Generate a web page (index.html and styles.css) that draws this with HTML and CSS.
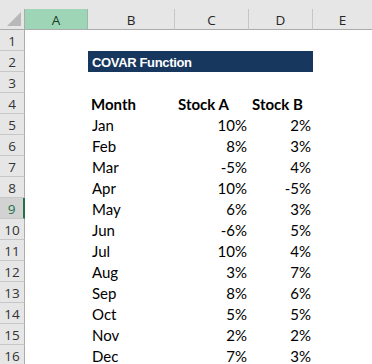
FILE: index.html
```html
<!DOCTYPE html>
<html>
<head>
<meta charset="utf-8">
<link rel="stylesheet" href="styles.css">
</head>
<body>
<div class="sheet">
  <div class="strip"></div>
  <div class="grid">
    <div class="corner"><span class="tri"></span></div>
    <div class="ch sel">A</div>
    <div class="ch">B</div>
    <div class="ch">C</div>
    <div class="ch">D</div>
    <div class="ch last">E</div>

    <div class="rh">1</div><div class="c"></div><div class="c"></div><div class="c"></div><div class="c"></div><div class="c"></div>

    <div class="rh">2</div><div class="c"></div><div class="title">COVAR Function</div><div class="c"></div>

    <div class="rh">3</div><div class="c"></div><div class="c"></div><div class="c"></div><div class="c"></div><div class="c"></div>

    <div class="rh">4</div><div class="c"></div><div class="c b">Month</div><div class="c b">Stock A</div><div class="c b">Stock B</div><div class="c"></div>

    <div class="rh">5</div><div class="c"></div><div class="c">Jan</div><div class="c n">10%</div><div class="c n">2%</div><div class="c"></div>
    <div class="rh">6</div><div class="c"></div><div class="c">Feb</div><div class="c n">8%</div><div class="c n">3%</div><div class="c"></div>
    <div class="rh">7</div><div class="c"></div><div class="c">Mar</div><div class="c n">-5%</div><div class="c n">4%</div><div class="c"></div>
    <div class="rh">8</div><div class="c"></div><div class="c">Apr</div><div class="c n">10%</div><div class="c n">-5%</div><div class="c"></div>
    <div class="rh active">9</div><div class="c"></div><div class="c">May</div><div class="c n">6%</div><div class="c n">3%</div><div class="c"></div>
    <div class="rh">10</div><div class="c"></div><div class="c">Jun</div><div class="c n">-6%</div><div class="c n">5%</div><div class="c"></div>
    <div class="rh">11</div><div class="c"></div><div class="c">Jul</div><div class="c n">10%</div><div class="c n">4%</div><div class="c"></div>
    <div class="rh">12</div><div class="c"></div><div class="c">Aug</div><div class="c n">3%</div><div class="c n">7%</div><div class="c"></div>
    <div class="rh">13</div><div class="c"></div><div class="c">Sep</div><div class="c n">8%</div><div class="c n">6%</div><div class="c"></div>
    <div class="rh">14</div><div class="c"></div><div class="c">Oct</div><div class="c n">5%</div><div class="c n">5%</div><div class="c"></div>
    <div class="rh">15</div><div class="c"></div><div class="c">Nov</div><div class="c n">2%</div><div class="c n">2%</div><div class="c"></div>
    <div class="rh">16</div><div class="c"></div><div class="c">Dec</div><div class="c n">7%</div><div class="c n">3%</div><div class="c"></div>
  </div>
</div>
</body>
</html>
```

FILE: styles.css
```css
html, body {
  margin: 0;
  padding: 0;
  background: #ffffff;
  overflow: hidden;
}

.sheet {
  width: 372px;
  height: 364px;
  overflow: hidden;
  background: #ffffff;
}

.strip {
  height: 9px;
  background: #e6e6e6;
}

.grid {
  display: grid;
  grid-template-columns: 25px 63px 87px 74px 64px 59px;
  grid-template-rows: 21px repeat(16, 21px);
}

.corner {
  background: #e6e6e6;
  border-right: 1px solid #ababab;
  border-bottom: 1px solid #ababab;
  box-sizing: border-box;
  display: flex;
  justify-content: flex-end;
  align-items: flex-end;
  padding: 0 3px 3px 0;
}

.tri {
  width: 0;
  height: 0;
  border-left: 14px solid transparent;
  border-bottom: 14px solid #b8b8b8;
}

.ch {
  background: #e6e6e6;
  border-right: 1px solid #c6c6c6;
  border-bottom: 1px solid #ababab;
  box-sizing: border-box;
  display: flex;
  align-items: center;
  justify-content: center;
  font-family: "Open Sans", "DejaVu Sans", sans-serif;
  font-size: 13.5px;
  color: #262626;
  padding-top: 1px;
}

.ch.sel {
  background: #9fd5b7;
  color: #1a3a28;
  border-right-color: #9ab9a8;
}

.ch.last {
  border-right: none;
}

.rh {
  background: #e6e6e6;
  border-right: 1px solid #ababab;
  border-bottom: 1px solid #c6c6c6;
  box-sizing: border-box;
  display: flex;
  align-items: center;
  justify-content: center;
  font-family: "Open Sans", "DejaVu Sans", sans-serif;
  font-size: 13.5px;
  color: #333333;
  padding-top: 1px;
}

.rh.active {
  background: #d2d2d2;
  color: #217346;
  border-right: 2px solid #217346;
}

.c {
  display: flex;
  align-items: flex-end;
  padding: 0 3px 1px 4px;
  box-sizing: border-box;
  font-family: "Lato", "Liberation Sans", sans-serif;
  font-size: 15px;
  line-height: 18px;
  color: #000000;
  white-space: nowrap;
}

.c.b {
  font-weight: bold;
  padding-left: 3px;
}

.c.n {
  justify-content: flex-end;
  padding-right: 2px;
}

.title {
  grid-column: span 3;
  background: #17375e;
  color: #ffffff;
  font-family: "Liberation Sans", Arial, sans-serif;
  font-weight: bold;
  font-size: 13px;
  letter-spacing: -0.35px;
  display: flex;
  align-items: center;
  padding: 2px 0 0 4px;
  white-space: nowrap;
}
```
